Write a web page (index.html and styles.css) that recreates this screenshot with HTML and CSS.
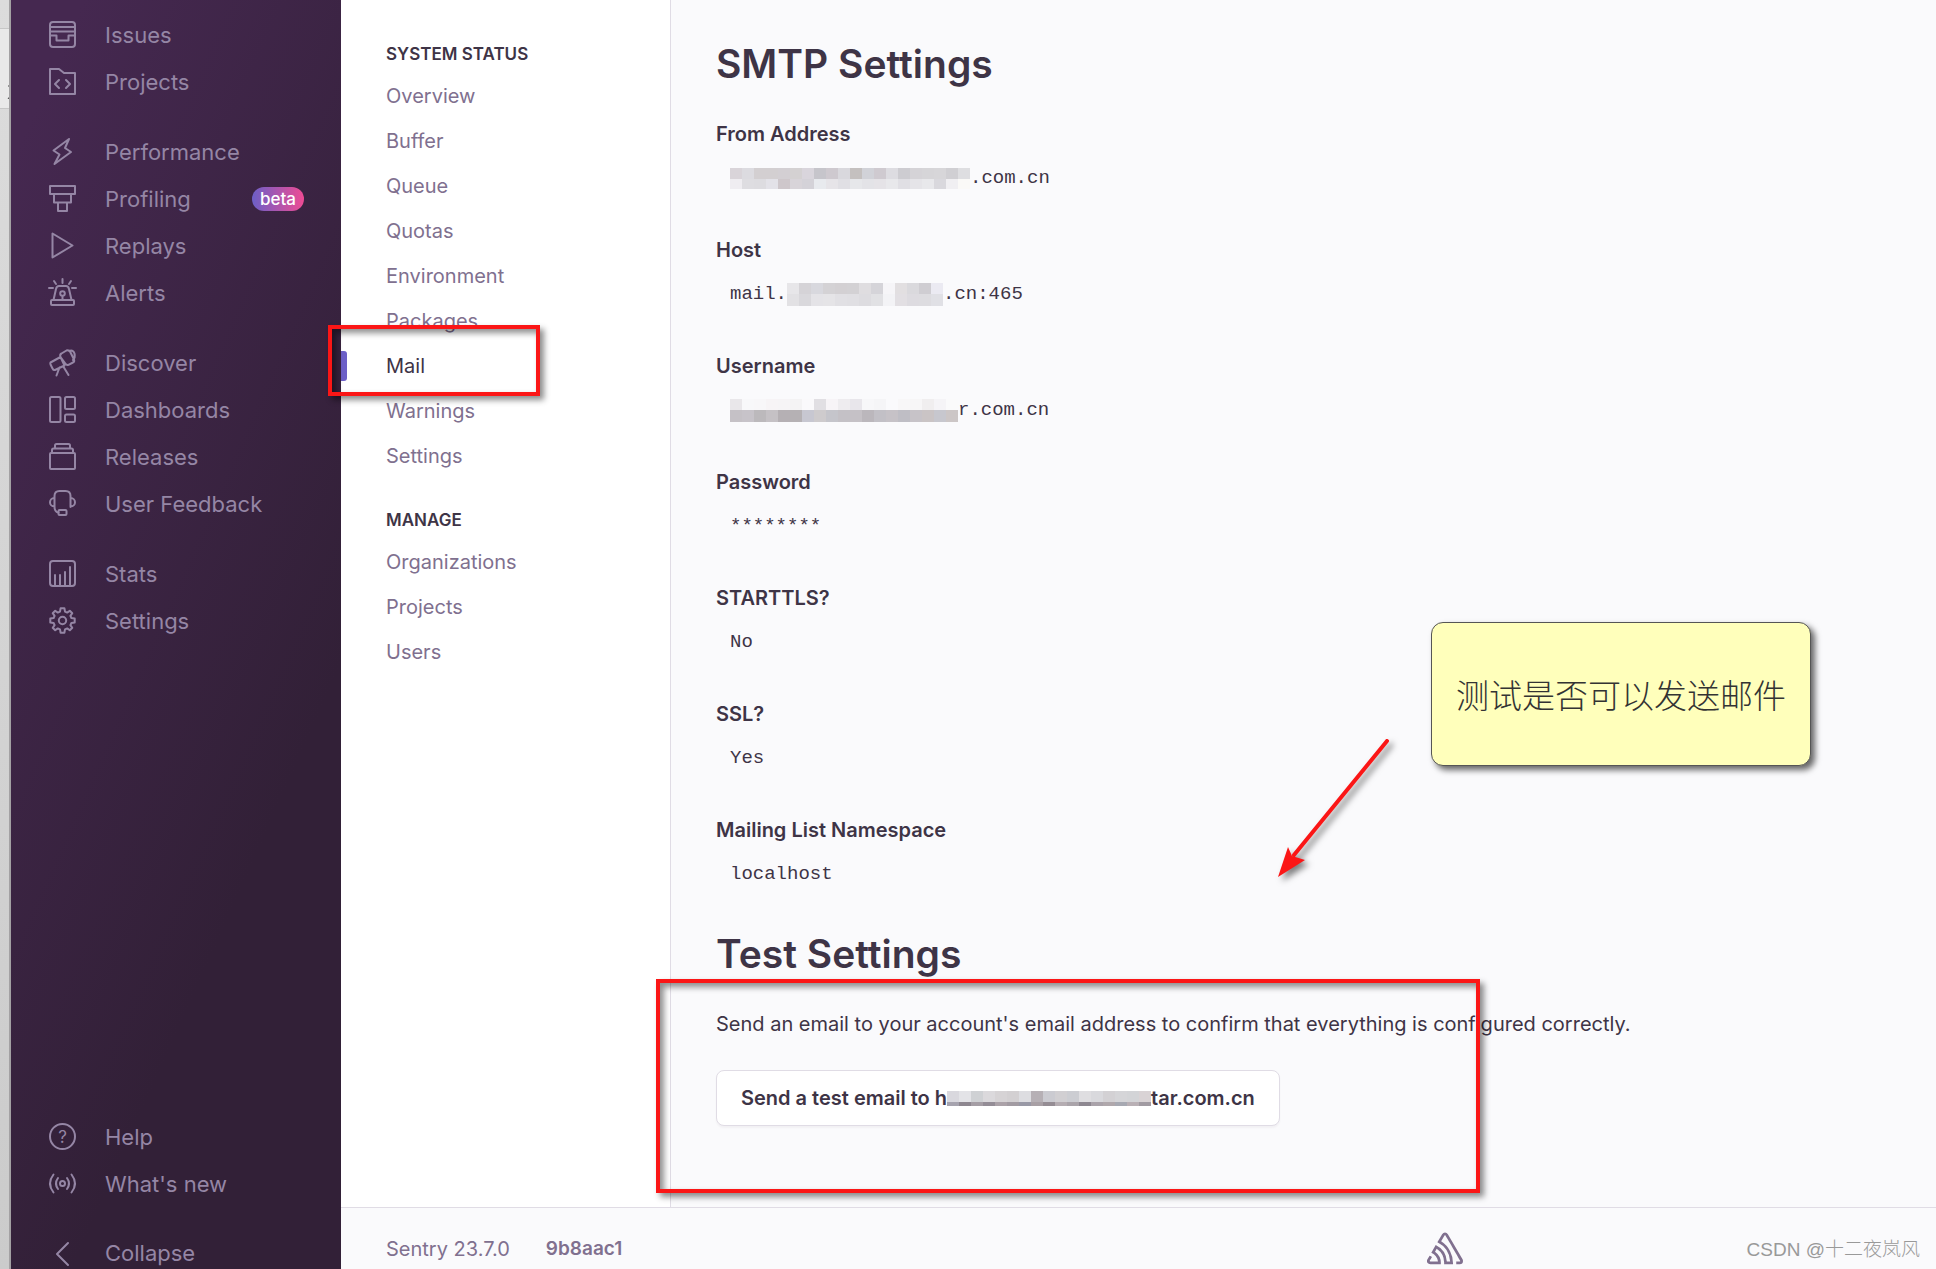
FILE: index.html
```html
<!DOCTYPE html>
<html lang="en">
<head>
    <meta charset="UTF-8">
    <meta name="viewport" content="width=device-width, initial-scale=1.0">
    <title>Mail - Sentry Admin</title>
    <link rel="stylesheet" href="styles.css">
</head>
<body>

<div class="app">
    <div class="window-edge">
        <div class="edge-tab">
            <svg width="9" height="18" viewBox="0 0 9 18"><path d="M1 4h8M8 4Q6 12 1 17M5 9h4"/></svg>
        </div>
    </div>

    <nav class="sidebar">
        <div class="side-main">
            <div class="side-group">
                <a href="#"><svg viewBox="0 0 27 27"><rect x="1" y="1" width="25" height="25" rx="3"/><path d="M1 6h25M1 10.500h25M1 14.500h6.500v5h12v-5H26"/></svg>Issues</a>
                <a href="#"><svg viewBox="0 0 27 27"><path d="M1 1h9l5 4h11v21H1zM10 12l-4 4 4 4M17 12l4 4-4 4"/></svg>Projects</a>
            </div>
            <div class="side-group">
                <a href="#"><svg viewBox="0 0 27 27"><path d="M20 1L4.500 12.500l6 4L5.500 26 22 14l-6-4z"/></svg>Performance</a>
                <a href="#"><svg viewBox="0 0 27 27"><path d="M1 1h25v8H1zM5 9v8.500h17V9M9 17.500V26h9v-8.500"/></svg>Profiling<span class="badge">beta</span></a>
                <a href="#"><svg viewBox="0 0 27 27"><path d="M3.500 1.500v24l20-12z"/></svg>Replays</a>
                <a href="#"><svg viewBox="0 0 27 27"><rect x="2" y="21" width="23" height="5" rx="1"/><path d="M4.500 21L7 10q.7-3 3-3h7q2.300 0 3 3l2.500 11M13.500 17v4M13.500 0v4M5 2l2 3M22 2l-2 3M0 9h4M23 9h4"/><circle cx="13.500" cy="14.500" r="2.300"/></svg>Alerts</a>
            </div>
            <div class="side-group">
                <a href="#"><svg viewBox="0 0 27 27"><path d="M1.500 13.500L11.500 8l4 8.500L6 21q-1.500.5-2.500-1.500l-2-4q-.5-1.500 0-2zM11.500 8q-1-2.500 1-3.500l5-3q2-1 3.500 1l4 8q.7 2-1 3l-4.500 2.300q-2 .7-3-1zM20 2q4-1.500 5.500 2.500 1 4-1.500 6.500M10.500 18.500l-3 8M14 17l5.500 9"/></svg>Discover</a>
                <a href="#"><svg viewBox="0 0 27 27"><rect x="1" y="1" width="10.500" height="25" rx="1.500"/><rect x="16" y="1" width="10" height="12" rx="1.500"/><rect x="16" y="18.500" width="10" height="7.500" rx="1.500"/></svg>Dashboards</a>
                <a href="#"><svg viewBox="0 0 27 27"><rect x="1" y="10" width="25" height="16" rx="1"/><path d="M3 10V7q0-1.500 1.500-1.500h18Q24 5.500 24 7v3M6 5.500V2.500Q6 1 7.500 1h12Q21 1 21 2.500v3"/></svg>Releases</a>
                <a href="#"><svg viewBox="0 0 27 27"><path d="M5.500 17V6q0-5 5-5h6q5 0 5 5v11M5.500 8C-.5 8-.5 16.500 5.500 16.500M21.500 8c6 0 6 8.500 0 8.500M5.500 16.500q0 5.500 4 6"/><rect x="9.500" y="20" width="8" height="5" rx="1"/></svg>User Feedback</a>
            </div>
            <div class="side-group">
                <a href="#"><svg viewBox="0 0 27 27"><rect x="1" y="1" width="25" height="25" rx="3"/><path d="M6 15v10M11 15v10M16 12v13M21 7v18"/></svg>Stats</a>
                <a href="#"><svg viewBox="-13.500 -13.500 27 27"><path d="M12.200 1.900L8.900 2.500 7.900 4.700 9.800 7.300 7.300 9.800 4.700 7.900 2.500 8.900 1.900 12.200H-1.900L-2.500 8.900-4.700 7.900-7.300 9.800-9.800 7.300-7.900 4.700-8.900 2.500-12.200 1.900V-1.900L-8.900-2.500-7.900-4.700-9.800-7.300-7.300-9.800-4.700-7.900-2.500-8.900-1.900-12.200H1.900L2.500-8.900 4.700-7.900 7.300-9.800 9.800-7.300 7.900-4.700 8.900-2.500 12.200-1.900z"/><circle r="3.700"/></svg>Settings</a>
            </div>
        </div>
        <div class="side-bottom">
            <a href="#"><svg viewBox="0 0 27 27"><circle cx="13.500" cy="13.500" r="12.500"/><text x="13.500" y="19.500">?</text></svg>Help</a>
            <a href="#"><svg viewBox="0 0 27 27"><circle cx="13.500" cy="13.500" r="2.500"/><path d="M9 8q-4 5.500 0 11M18 8q4 5.500 0 11M4.500 4.500q-7 9 0 18M22.500 4.500q7 9 0 18"/></svg>What's new</a>
            <button type="button" class="collapse"><svg viewBox="0 0 27 27"><path d="M19 3L8 14l11 11"/></svg>Collapse</button>
        </div>
    </nav>

    <div class="page">
        <div class="columns">
            <nav class="subnav">
                <h2>System Status</h2>
                <a href="#">Overview</a>
                <a href="#">Buffer</a>
                <a href="#">Queue</a>
                <a href="#">Quotas</a>
                <a href="#">Environment</a>
                <a href="#">Packages</a>
                <a href="#" class="active">Mail</a>
                <a href="#">Warnings</a>
                <a href="#">Settings</a>
                <h2>Manage</h2>
                <a href="#">Organizations</a>
                <a href="#">Projects</a>
                <a href="#">Users</a>
            </nav>

            <main class="content">
                <h1>SMTP Settings</h1>
                <dl class="settings">
                    <dt>From Address</dt>
                    <dd><svg class="mosaic" data-mosaic="from"></svg>.com.cn</dd>
                    <dt>Host</dt>
                    <dd>mail.<svg class="mosaic" data-mosaic="host"></svg>.cn:465</dd>
                    <dt>Username</dt>
                    <dd><svg class="mosaic" data-mosaic="user"></svg>r.com.cn</dd>
                    <dt>Password</dt>
                    <dd>********</dd>
                    <dt>STARTTLS?</dt>
                    <dd>No</dd>
                    <dt>SSL?</dt>
                    <dd>Yes</dd>
                    <dt>Mailing List Namespace</dt>
                    <dd>localhost</dd>
                </dl>
                <h1>Test Settings</h1>
                <p>Send an email to your account's email address to confirm that everything is configured correctly.</p>
                <button type="button" class="test-btn">Send a test email to h<svg class="mosaic" data-mosaic="button"></svg>tar.com.cn</button>
            </main>
        </div>

        <footer class="footer">
            <span>Sentry 23.7.0</span>
            <a href="#" class="build">9b8aac1</a>
            <a href="#" class="logo" aria-label="Sentry">
                <svg width="36" height="36" viewBox="0 0 72 66"><path d="M29 2.260a4.670 4.670 0 0 0-8 0L14.420 13.530A32.210 32.210 0 0 1 32.170 40.190H27.550A27.680 27.680 0 0 0 12.090 17.470L6 28a15.920 15.920 0 0 1 9.230 12.170H4.620A.76.76 0 0 1 4 39.060l2.940-5a10.740 10.740 0 0 0-3.360-1.900l-2.910 5a4.540 4.540 0 0 0 1.690 6.240A4.660 4.660 0 0 0 4.620 44H19.150a19.400 19.400 0 0 0-8-17.310l2.310-4A23.870 23.870 0 0 1 23.760 44H36.070a35.880 35.880 0 0 0-16.410-31.800l4.670-8a.77.77 0 0 1 1.050-.27c.53.29 20.290 34.770 20.660 35.170a.76.76 0 0 1-.68 1.130H40.600q.09 1.910 0 3.810h4.780A4.590 4.590 0 0 0 50 39.430a4.490 4.490 0 0 0-.62-2.280z" transform="scale(1.440)"/></svg>
            </a>
        </footer>
    </div>
</div>

<!-- Annotations over the page -->
<div class="mark mark-mail"></div>
<div class="mark mark-test"></div>
<svg class="arrow" width="130" height="160" viewBox="0 0 130 160">
    <path class="arrow-line" d="M117 11L24 125"/>
    <path class="arrow-head" d="M8 147L18 117l4 9 13 4z"/>
</svg>
<div class="note">测试是否可以发送邮件</div>
<div class="watermark">CSDN @十二夜岚风</div>

<script>
    // each row: [height, colours of the cells]
    const mosaics = {
        from: [
            [11, "d9d4d9 dcdbe0 d3cfd1 d3cfd1 d3cfd3 d4d1d2 d9d5dc c6c5cb cec9cf d9d8dd c4c0bf d1d2d8 cfcad0 dddce1 cdccd1 d5d3d7 d6d5d8 d7d6d9 d0cfd3 dedee1"],
            [10, "efedf1 dedde1 dddce0 e3e2e8 cec7cb d8d4d9 d4d2d8 e8eaee e6e4e8 e0dfe4 e6e7ea e3e3e7 e5e3e7 e8e8eb e0dfe4 e5e4e8 e8e8eb d9d8dd f0eff2 faf9f7"]
        ],
        host: [
            [11, "e7e6e9 d5d3d7 d8d8de d4d2d5 d3d0d3 d3d1d4 dfdde0 d5d4d9 f6f5f8 e2dfe1 dad9dd cfcdd2 ebeaf2"],
            [12, "e2e1e4 d9d8dc e4e3e7 e5e4e7 e1e0e4 e0dfe3 dddce0 e1e1e4 f3f3f6 e2dfe3 dddbe0 dddce0 e0e0e5"]
        ],
        user: [
            [11, "e9e7ea f8f8fa f8f7f9 f7f4f6 f6f4f6 f4f3f4 faf9fb e1dfe3 f7f4f7 eeecef e8e6eb f7f7f9 f5f5f7 fafafc f8f7f8 f7f6f7 f0eeef f5f4f7 fafafb"],
            [12, "c5c1c6 c7c3c9 bcb9bc c5c1c5 b5b0b4 b5b1b4 c7c7d1 cecbcd c5c5cb c4c1c6 c5c1c6 bbb7bc c2c0c6 c6c2c7 bfbec5 c7c3c8 cac4c5 c7c7ce ccc6c6"]
        ],
        button: [
            [11, "d9d8de e3e3e7 cfd1d4 dbd9dc d6d3d5 d3d0d2 dddde1 b6b0b5 cbcbd1 d1cfd2 cccdd2 dfdee1 d9d9dd d3d1d4 d5d5d8 d3d4d7 d9d3d5"],
            [4, "a6a3ae 8e8790 a59ea5 948d96 aba2a8 a29ba2 9999a6 a8a0a5 958d94 b5adb2 aaa4aa 8e8891 aaa3aa b0a8ac a7a9b2 b9b0b5 a19ba2"]
        ]
    };

    document.querySelectorAll("[data-mosaic]").forEach(svg => {
        let y = 0;
        let width = 0;
        mosaics[svg.dataset.mosaic].forEach(([height, colours]) => {
            const cells = colours.split(" ");
            width = cells.length * 12;
            cells.forEach((colour, i) => {
                const rect = document.createElementNS("http://www.w3.org/2000/svg", "rect");
                rect.setAttribute("x", i * 12);
                rect.setAttribute("y", y);
                rect.setAttribute("width", 12);
                rect.setAttribute("height", height);
                rect.setAttribute("fill", "#" + colour);
                svg.appendChild(rect);
            });
            y += height;
        });
        svg.setAttribute("width", width);
        svg.setAttribute("height", y);
    });
</script>

</body>
</html>
```
FILE: styles.css
```css
* {
    box-sizing: border-box;
}
body {
    margin: 0;
    font-family: Inter, "Noto Sans", sans-serif;
    font-size: 20px;
    line-height: 28px;
    color: #3e3446;
    background-color: #fafafc;
}
a {
    color: inherit;
    text-decoration: none;
}
.app {
    display: flex;
    min-height: 100vh;
}
.window-edge {
    flex: none;
    width: 11px;
    padding-top: 28px;
    border-right: 2px solid #a3a1a3;
    background: linear-gradient(#dcdcdc, #cbcbcb);
}
.edge-tab {
    height: 81px;
    padding-top: 50px;
    border-top: 1px solid #c6c6c6;
    border-bottom: 1px solid #c6c6c6;
    background-color: #e9e9e9;
    overflow: hidden;
}
.edge-tab svg {
    margin-left: 7px;
    fill: none;
    stroke: #444;
}

/* Sidebar */
.sidebar {
    flex: none;
    display: flex;
    flex-direction: column;
    justify-content: space-between;
    width: 330px;
    padding: 11px 37px 0 38px;
    background: linear-gradient(294deg, #322037 30%, #452850 92%);
    color: #9586a5;
    font-size: 22px;
}
.side-group {
    margin-bottom: 23px;
}
.sidebar a, .collapse {
    display: flex;
    align-items: center;
    gap: 29px;
    height: 47px;
}
.sidebar svg {
    flex: none;
    width: 27px;
    height: 27px;
    overflow: visible;
    fill: none;
    stroke: currentColor;
    stroke-width: 2;
    stroke-linejoin: round;
    stroke-linecap: round;
}
.sidebar text {
    fill: currentColor;
    stroke: none;
    font-size: 17px;
    text-anchor: middle;
}
.badge {
    margin-left: auto;
    padding: 0 8px;
    border-radius: 12px;
    background: linear-gradient(90deg, #6c5fc7, #ee4b94);
    color: #fff;
    font-size: 17px;
    font-weight: 500;
    line-height: 24px;
}
.collapse {
    height: 32px;
    margin-top: 30px;
    padding: 0;
    border: none;
    background: none;
    color: inherit;
    font: inherit;
    cursor: pointer;
}

/* Page */
.page {
    flex: 1;
    display: flex;
    flex-direction: column;
}
.columns {
    flex: 1;
    display: flex;
}
.subnav {
    flex: none;
    width: 330px;
    padding: 40px 45px 0;
    border-right: 1px solid #e0dce5;
    background-color: #fff;
    color: #80708f;
}
.subnav h2 {
    margin: 0 0 6px;
    color: #3e3446;
    font-size: 17px;
    font-weight: 600;
    text-transform: uppercase;
}
.subnav a {
    display: block;
    line-height: 45px;
}
.subnav a + h2 {
    margin-top: 27px;
}
.subnav .active {
    position: relative;
    color: #3e3446;
}
.subnav .active::before {
    content: "";
    position: absolute;
    left: -45px;
    top: 7px;
    width: 6px;
    height: 30px;
    border-radius: 0 3px 3px 0;
    background-color: #6c5fc7;
}
.content {
    flex: 1;
    padding: 40px 45px;
}
h1 {
    margin: 0 0 33px;
    font-size: 39px;
    font-weight: 600;
    line-height: 47px;
}
.settings {
    margin: 0;
}
dt {
    font-weight: 600;
}
dd {
    display: flex;
    align-items: center;
    height: 56px;
    margin: 0 0 32px;
    padding: 4px 14px 0;
    font-family: "Liberation Mono", monospace;
    font-size: 19px;
}
dd:last-child {
    margin-bottom: 30px;
}
.content p {
    margin: 0 0 32px;
}
.mosaic {
    flex: none;
}
.test-btn {
    display: flex;
    align-items: center;
    height: 56px;
    padding: 0 24px;
    border: 1px solid #e0dce5;
    border-radius: 8px;
    background-color: #fff;
    box-shadow: 0 2px 2px rgba(43, 34, 51, 0.04);
    color: #3e3446;
    font: inherit;
    font-weight: 600;
    cursor: pointer;
}
.footer {
    display: flex;
    align-items: center;
    gap: 36px;
    height: 62px;
    padding: 21px 45px 0;
    border-top: 1px solid #e0dce5;
    color: #80708f;
}
.build {
    font-size: 19px;
    font-weight: 600;
}
.logo {
    margin-left: auto;
    margin-right: 428px;
    height: 36px;
}
.logo svg {
    fill: #80708f;
}

/* Annotations */
.mark {
    position: absolute;
    border: 4px solid #fb1616;
    box-shadow: 4px 4px 6px rgba(0, 0, 0, 0.45), inset 4px 4px 6px rgba(0, 0, 0, 0.45);
}
.mark-mail {
    left: 328px;
    top: 325px;
    width: 212px;
    height: 71px;
}
.mark-test {
    left: 656px;
    top: 979px;
    width: 824px;
    height: 214px;
}
.arrow {
    position: absolute;
    left: 1270px;
    top: 730px;
    fill: #fb1616;
    filter: drop-shadow(4px 4px 3px rgba(0, 0, 0, 0.5));
}
.arrow-line {
    stroke: #fb1616;
    stroke-width: 4;
    stroke-linecap: round;
}
.note {
    position: absolute;
    left: 1431px;
    top: 622px;
    padding: 48px 24px;
    border: 1px solid #555;
    border-radius: 12px;
    background-color: #ffffbb;
    box-shadow: 4px 4px 6px rgba(0, 0, 0, 0.6);
    color: #333;
    font-family: "Noto Sans CJK SC", sans-serif;
    font-size: 33px;
    font-weight: 300;
    line-height: 46px;
}
.watermark {
    position: absolute;
    right: 16px;
    top: 1236px;
    color: #999;
    font-family: "Liberation Sans", "Noto Sans CJK SC", sans-serif;
    font-size: 19px;
    font-weight: 300;
}
```
